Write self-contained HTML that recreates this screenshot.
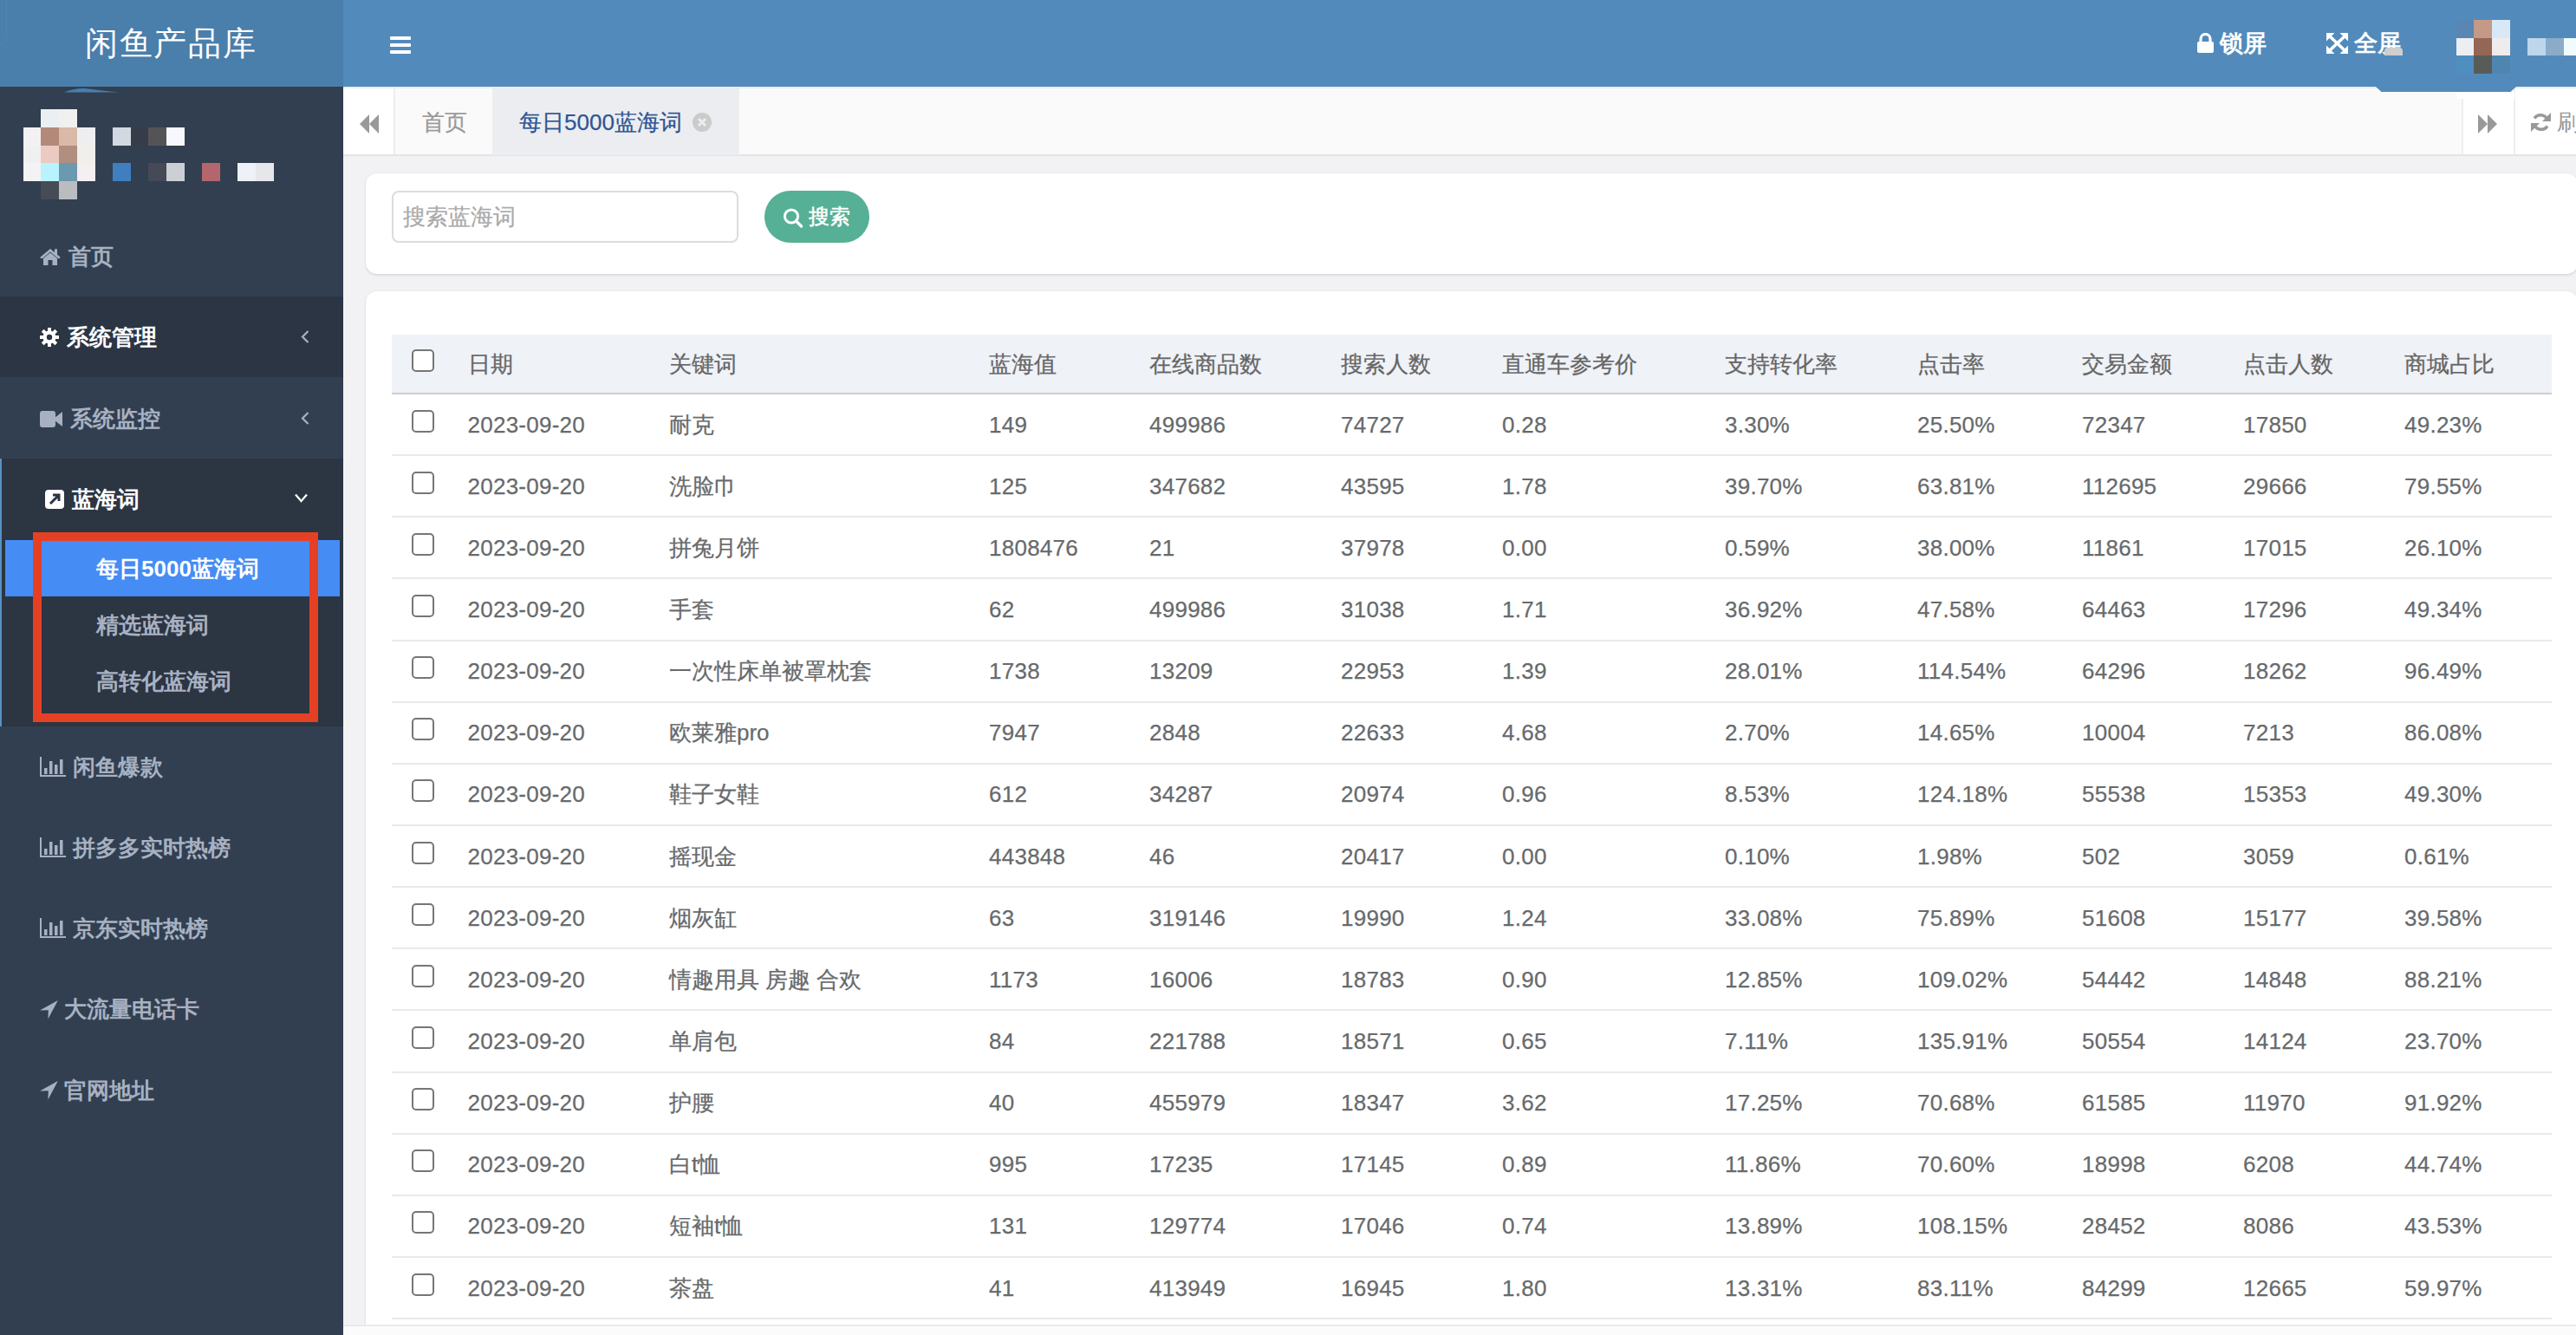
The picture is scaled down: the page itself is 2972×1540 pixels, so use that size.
<!DOCTYPE html><html><head><meta charset="utf-8"><style>
*{margin:0;padding:0;box-sizing:border-box}
html,body{width:2972px;height:1540px;overflow:hidden;background:#f2f2f4;font-family:"Liberation Sans",sans-serif}
.a{position:absolute}
.t{position:absolute;white-space:nowrap;line-height:40px;height:40px}
.c{-webkit-text-stroke:0.25px currentColor}
</style></head><body><div class="a" style="left:0;top:0;width:396px;height:100px;background:#4a7eab"></div>
<div class="a" style="left:396px;top:0;width:2576px;height:100px;background:#528bbb"></div>
<div class="a" style="left:-20px;top:-20px;width:28px;height:73px;border:1px solid rgba(255,255,255,0.06);border-radius:12px"></div>
<div class="t" style="left:98px;top:20px;font-size:38px;color:#fff;font-weight:300;letter-spacing:1.7px;line-height:60px;height:60px">闲鱼产品库</div>
<div class="a" style="left:450px;top:42px;width:24px;height:4px;background:#fff;border-radius:1px"></div>
<div class="a" style="left:450px;top:50px;width:24px;height:4px;background:#fff;border-radius:1px"></div>
<div class="a" style="left:450px;top:58px;width:24px;height:4px;background:#fff;border-radius:1px"></div>
<svg class="a" style="left:2535px;top:38px" width="19" height="23" viewBox="0 0 19 23"><path d="M4 10 V7 a5.5 5.5 0 0 1 11 0 V10" fill="none" stroke="#fff" stroke-width="3.2"/><rect x="0" y="10" width="19" height="13" rx="2" fill="#fff"/></svg>
<div class="t" style="left:2561px;top:30px;font-size:27px;color:#fff;font-weight:bold">锁屏</div>
<svg class="a" style="left:2684px;top:38px" width="25" height="24" viewBox="0 0 25 24"><g fill="#fff"><polygon points="0,0 9.5,0 6.5,3 0,9.5"/><polygon points="25,0 15.5,0 18.5,3 25,9.5"/><polygon points="0,24 9.5,24 6.5,21 0,14.5"/><polygon points="25,24 15.5,24 18.5,21 25,14.5"/></g><path d="M3 3 L22 21 M22 3 L3 21" stroke="#fff" stroke-width="3.6"/></svg>
<div class="t" style="left:2716px;top:30px;font-size:27px;color:#fff;font-weight:bold">全屏</div>
<div class="a" style="left:2751px;top:55px;width:21px;height:9px;background:#cfcfcf;border-radius:4px 4px 0 0"></div>
<div class="a" style="left:2834px;top:23px;width:21px;height:21px;background:#5a86b3"></div>
<div class="a" style="left:2854px;top:23px;width:21px;height:21px;background:#c49a86"></div>
<div class="a" style="left:2875px;top:23px;width:21px;height:21px;background:#d9e8f7"></div>
<div class="a" style="left:2834px;top:44px;width:21px;height:21px;background:#edeef2"></div>
<div class="a" style="left:2854px;top:44px;width:21px;height:21px;background:#936655"></div>
<div class="a" style="left:2875px;top:44px;width:21px;height:21px;background:#eeeced"></div>
<div class="a" style="left:2834px;top:64px;width:21px;height:21px;background:#4f8ec0"></div>
<div class="a" style="left:2854px;top:64px;width:21px;height:21px;background:#585c58"></div>
<div class="a" style="left:2875px;top:64px;width:21px;height:21px;background:#4f86b0"></div>
<div class="a" style="left:2916px;top:44px;width:21px;height:20px;background:#bed6ec"></div>
<div class="a" style="left:2937px;top:44px;width:21px;height:20px;background:#8aacc8"></div>
<div class="a" style="left:2958px;top:44px;width:21px;height:20px;background:#f0fbfe"></div>
<div class="a" style="left:0;top:100px;width:396px;height:1440px;background:#323f50"></div>
<svg class="a" style="left:74px;top:100px" width="65" height="8"><path d="M0 6.5 Q12 1.5 24 2 Q45 4.5 62 6.5 Z" fill="#4a7eab"/></svg>
<div class="a" style="left:47px;top:126px;width:21px;height:21px;background:#eceff2"></div>
<div class="a" style="left:68px;top:126px;width:21px;height:21px;background:#f0f0f0"></div>
<div class="a" style="left:27px;top:147px;width:21px;height:21px;background:#f3f1f3"></div>
<div class="a" style="left:47px;top:147px;width:21px;height:21px;background:#b38979"></div>
<div class="a" style="left:68px;top:147px;width:21px;height:21px;background:#d9b9a7"></div>
<div class="a" style="left:89px;top:147px;width:21px;height:21px;background:#eeeef1"></div>
<div class="a" style="left:27px;top:168px;width:21px;height:21px;background:#f0f0f0"></div>
<div class="a" style="left:47px;top:168px;width:21px;height:21px;background:#ebcbc1"></div>
<div class="a" style="left:68px;top:168px;width:21px;height:21px;background:#b08f80"></div>
<div class="a" style="left:89px;top:168px;width:21px;height:21px;background:#f1efeb"></div>
<div class="a" style="left:27px;top:188px;width:21px;height:21px;background:#f3f2f4"></div>
<div class="a" style="left:47px;top:188px;width:21px;height:21px;background:#b8f3ff"></div>
<div class="a" style="left:68px;top:188px;width:21px;height:21px;background:#6a99b0"></div>
<div class="a" style="left:89px;top:188px;width:21px;height:21px;background:#f4eff1"></div>
<div class="a" style="left:47px;top:209px;width:21px;height:21px;background:#454c55"></div>
<div class="a" style="left:68px;top:209px;width:21px;height:21px;background:#babcc0"></div>
<div class="a" style="left:130px;top:147px;width:21px;height:21px;background:#d3d9e1"></div>
<div class="a" style="left:151px;top:147px;width:21px;height:21px;background:#363c48"></div>
<div class="a" style="left:171px;top:147px;width:21px;height:21px;background:#545457"></div>
<div class="a" style="left:192px;top:147px;width:21px;height:21px;background:#f6f8fd"></div>
<div class="a" style="left:130px;top:188px;width:21px;height:21px;background:#3f7fc0"></div>
<div class="a" style="left:171px;top:188px;width:21px;height:21px;background:#464a56"></div>
<div class="a" style="left:192px;top:188px;width:21px;height:21px;background:#ccd0d5"></div>
<div class="a" style="left:233px;top:188px;width:21px;height:21px;background:#b3666e"></div>
<div class="a" style="left:274px;top:188px;width:21px;height:21px;background:#eef1f8"></div>
<div class="a" style="left:295px;top:188px;width:21px;height:21px;background:#e6e7eb"></div>
<div class="a" style="left:0;top:342px;width:396px;height:93px;background:#2b3544"></div>
<div class="a" style="left:0;top:529px;width:396px;height:309px;background:#2c3542"></div>
<div class="a" style="left:0;top:529px;width:2px;height:309px;background:#5891c2"></div>
<div class="a" style="left:6px;top:623px;width:386px;height:65px;background:#458cf4"></div>
<svg class="a" style="left:46px;top:287px" width="24" height="19" viewBox="0 0 24 19"><path d="M12 0 L24 10 L21.5 11.5 L12 3.5 L2.5 11.5 L0 10 Z M17 0.3 H20 V8 L17 5.5 Z" fill="#a7b1c2"/><path d="M4 11 L12 4.5 L20 11 V19 H14.5 V13 H9.5 V19 H4 Z" fill="#a7b1c2"/></svg>
<div class="t" style="left:79px;top:276px;font-size:26px;color:#a7b1c2;font-weight:bold">首页</div>
<svg class="a" style="left:46px;top:378px" width="22" height="22" viewBox="0 0 22 22"><g fill="#fff"><circle cx="11" cy="11" r="7.5"/><rect x="9" y="0" width="4" height="6" transform="rotate(0 11 11)"/><rect x="9" y="0" width="4" height="6" transform="rotate(45 11 11)"/><rect x="9" y="0" width="4" height="6" transform="rotate(90 11 11)"/><rect x="9" y="0" width="4" height="6" transform="rotate(135 11 11)"/><rect x="9" y="0" width="4" height="6" transform="rotate(180 11 11)"/><rect x="9" y="0" width="4" height="6" transform="rotate(225 11 11)"/><rect x="9" y="0" width="4" height="6" transform="rotate(270 11 11)"/><rect x="9" y="0" width="4" height="6" transform="rotate(315 11 11)"/></g><circle cx="11" cy="11" r="3.2" fill="#2b3544"/></svg>
<div class="t" style="left:77px;top:369px;font-size:26px;color:#fff;font-weight:bold">系统管理</div>
<svg class="a" style="left:347px;top:381px" width="10" height="15" viewBox="0 0 10 15"><path d="M8.5 1 L2 7.5 L8.5 14" fill="none" stroke="#a7b1c2" stroke-width="2.2"/></svg>
<svg class="a" style="left:46px;top:474px" width="26" height="19" viewBox="0 0 26 19"><rect x="0" y="0" width="18" height="19" rx="3" fill="#a7b1c2"/><polygon points="17,8 26,1 26,18 17,11" fill="#a7b1c2"/></svg>
<div class="t" style="left:81px;top:463px;font-size:26px;color:#a7b1c2;font-weight:bold">系统监控</div>
<svg class="a" style="left:347px;top:475px" width="10" height="15" viewBox="0 0 10 15"><path d="M8.5 1 L2 7.5 L8.5 14" fill="none" stroke="#a7b1c2" stroke-width="2.2"/></svg>
<svg class="a" style="left:52px;top:565px" width="22" height="22" viewBox="0 0 22 22"><rect x="0" y="0" width="22" height="22" rx="4" fill="#fff"/><path d="M6 16 L15 7 M9 6 H16 V13" fill="none" stroke="#2c3542" stroke-width="3"/></svg>
<div class="t" style="left:83px;top:556px;font-size:26px;color:#fff;font-weight:bold">蓝海词</div>
<svg class="a" style="left:340px;top:569px" width="15" height="11" viewBox="0 0 15 11"><path d="M1 1.5 L7.5 9 L14 1.5" fill="none" stroke="#fff" stroke-width="2.2"/></svg>
<div class="t" style="left:111px;top:636px;font-size:26px;color:#fff;font-weight:bold">每日5000蓝海词</div>
<div class="t" style="left:111px;top:701px;font-size:26px;color:#a7b1c2;font-weight:bold">精选蓝海词</div>
<div class="t" style="left:111px;top:766px;font-size:26px;color:#a7b1c2;font-weight:bold">高转化蓝海词</div>
<div class="a" style="left:38px;top:614px;width:329px;height:219px;border:10px solid #e64024"></div>
<svg class="a" style="left:46px;top:873px" width="30" height="23" viewBox="0 0 30 23"><g fill="#a7b1c2"><rect x="0" y="0" width="2" height="23"/><rect x="0" y="21" width="30" height="2"/><rect x="5" y="13" width="3.5" height="7"/><rect x="11" y="5" width="3.5" height="15"/><rect x="17" y="9" width="3.5" height="11"/><rect x="23" y="3" width="3.5" height="17"/></g></svg>
<div class="t" style="left:84px;top:865px;font-size:26px;color:#a7b1c2;font-weight:bold">闲鱼爆款</div>
<svg class="a" style="left:46px;top:966px" width="30" height="23" viewBox="0 0 30 23"><g fill="#a7b1c2"><rect x="0" y="0" width="2" height="23"/><rect x="0" y="21" width="30" height="2"/><rect x="5" y="13" width="3.5" height="7"/><rect x="11" y="5" width="3.5" height="15"/><rect x="17" y="9" width="3.5" height="11"/><rect x="23" y="3" width="3.5" height="17"/></g></svg>
<div class="t" style="left:84px;top:958px;font-size:26px;color:#a7b1c2;font-weight:bold">拼多多实时热榜</div>
<svg class="a" style="left:46px;top:1059px" width="30" height="23" viewBox="0 0 30 23"><g fill="#a7b1c2"><rect x="0" y="0" width="2" height="23"/><rect x="0" y="21" width="30" height="2"/><rect x="5" y="13" width="3.5" height="7"/><rect x="11" y="5" width="3.5" height="15"/><rect x="17" y="9" width="3.5" height="11"/><rect x="23" y="3" width="3.5" height="17"/></g></svg>
<div class="t" style="left:84px;top:1051px;font-size:26px;color:#a7b1c2;font-weight:bold">京东实时热榜</div>
<svg class="a" style="left:46px;top:1154px" width="21" height="22" viewBox="0 0 21 22"><path d="M20.8 0 L0 11.6 L9.8 11.2 L9.4 21.6 Z" fill="#a7b1c2"/></svg>
<div class="t" style="left:74px;top:1144px;font-size:26px;color:#a7b1c2;font-weight:bold">大流量电话卡</div>
<svg class="a" style="left:46px;top:1247px" width="21" height="22" viewBox="0 0 21 22"><path d="M20.8 0 L0 11.6 L9.8 11.2 L9.4 21.6 Z" fill="#a7b1c2"/></svg>
<div class="t" style="left:74px;top:1238px;font-size:26px;color:#a7b1c2;font-weight:bold">官网地址</div>
<div class="a" style="left:396px;top:100px;width:2576px;height:2px;background:#e8ebef"></div>
<div class="a" style="left:396px;top:102px;width:2576px;height:76px;background:#fafafa"></div>
<div class="a" style="left:396px;top:178px;width:2576px;height:2px;background:#e5e5e6"></div>
<div class="a" style="left:396px;top:102px;width:60px;height:76px;background:#fff;border-right:2px solid #eee"></div>
<svg class="a" style="left:415px;top:132px" width="22" height="22" viewBox="0 0 22 22"><polygon points="0,11 11,0 11,22" fill="#999"/><polygon points="11,11 22,0 22,22" fill="#999"/></svg>
<div class="t c" style="left:487px;top:121px;font-size:26px;color:#999">首页</div>
<div class="a" style="left:568px;top:102px;width:285px;height:77px;background:#ecedf0"></div>
<div class="t c" style="left:599px;top:121px;font-size:26px;color:#2f5596">每日5000蓝海词</div>
<svg class="a" style="left:799px;top:130px" width="22" height="22" viewBox="0 0 22 22"><circle cx="11" cy="11" r="11" fill="#cbcbcb"/><path d="M7 7 L15 15 M15 7 L7 15" stroke="#ecedf0" stroke-width="3"/></svg>
<div class="a" style="left:2840px;top:102px;width:62px;height:76px;background:#fff;border-left:2px solid #eee;border-right:2px solid #eee"></div>
<svg class="a" style="left:2859px;top:132px" width="22" height="22" viewBox="0 0 22 22"><polygon points="0,0 11,11 0,22" fill="#999"/><polygon points="11,0 22,11 11,22" fill="#999"/></svg>
<div class="a" style="left:2902px;top:102px;width:70px;height:76px;background:#fff"></div>
<svg class="a" style="left:2920px;top:130px" width="23" height="22" viewBox="0 0 23 22"><path d="M19 8 A8.5 8.5 0 0 0 4 6.5" fill="none" stroke="#999" stroke-width="3.5"/><polygon points="23,0 23,10 13,10" fill="#999"/><path d="M4 14 A8.5 8.5 0 0 0 19 15.5" fill="none" stroke="#999" stroke-width="3.5"/><polygon points="0,22 0,12 10,12" fill="#999"/></svg>
<div class="t" style="left:2950px;top:121px;font-size:26px;color:#999">刷新</div>
<svg class="a" style="left:2741px;top:100px" width="162" height="6"><polygon points="0,0 162,0 155.5,6 6.5,6" fill="#528bbb"/></svg>
<div class="a" style="left:2834px;top:106px;width:67px;height:8px;background:#fff"></div>
<div class="a" style="left:422px;top:200px;width:2552px;height:116px;background:#fff;border-radius:13px;box-shadow:0 0 3px rgba(0,0,0,0.07),0 2px 3px rgba(0,0,0,0.08)"></div>
<div class="a" style="left:452px;top:220px;width:400px;height:60px;background:#fff;border:2px solid #dcdcdc;border-radius:8px"></div>
<div class="t c" style="left:465px;top:230px;font-size:26px;color:#aaa">搜索蓝海词</div>
<div class="a" style="left:882px;top:220px;width:121px;height:60px;background:#55b095;border-radius:30px"></div>
<svg class="a" style="left:903px;top:239px" width="24" height="24" viewBox="0 0 24 24"><circle cx="10" cy="10.5" r="7.6" fill="none" stroke="#fff" stroke-width="3"/><path d="M15.5 16 L21.5 22" stroke="#fff" stroke-width="3.4" stroke-linecap="round"/></svg>
<div class="t" style="left:933px;top:230px;font-size:24px;color:#fff;-webkit-text-stroke:0.5px #fff">搜索</div>
<div class="a" style="left:422px;top:336px;width:2552px;height:1300px;background:#fff;border-radius:13px;box-shadow:0 0 3px rgba(0,0,0,0.07),0 2px 3px rgba(0,0,0,0.08)"></div>
<div class="a" style="left:452px;top:386px;width:2492px;height:67px;background:#eff2f7"></div>
<div class="a" style="left:452px;top:453px;width:2492px;height:2px;background:#cdced0"></div>
<div class="a" style="left:475px;top:403px;width:26px;height:26px;border:2px solid #767676;border-radius:5px;background:#fff"></div>
<div class="t c" style="left:539.5px;top:400px;font-size:26px;color:#666">日期</div>
<div class="t c" style="left:772px;top:400px;font-size:26px;color:#666">关键词</div>
<div class="t c" style="left:1141px;top:400px;font-size:26px;color:#666">蓝海值</div>
<div class="t c" style="left:1326px;top:400px;font-size:26px;color:#666">在线商品数</div>
<div class="t c" style="left:1547px;top:400px;font-size:26px;color:#666">搜索人数</div>
<div class="t c" style="left:1733px;top:400px;font-size:26px;color:#666">直通车参考价</div>
<div class="t c" style="left:1990px;top:400px;font-size:26px;color:#666">支持转化率</div>
<div class="t c" style="left:2212px;top:400px;font-size:26px;color:#666">点击率</div>
<div class="t c" style="left:2402px;top:400px;font-size:26px;color:#666">交易金额</div>
<div class="t c" style="left:2588px;top:400px;font-size:26px;color:#666">点击人数</div>
<div class="t c" style="left:2774px;top:400px;font-size:26px;color:#666">商城占比</div>
<div class="a" style="left:452px;top:524.14px;width:2492px;height:2px;background:#e8e9eb"></div>
<div class="a" style="left:475px;top:473px;width:26px;height:26px;border:2px solid #767676;border-radius:5px;background:#fff"></div>
<div class="t c" style="left:539.5px;top:469.57px;font-size:26px;color:#676a6c;letter-spacing:0.25px;">2023-09-20</div>
<div class="t c" style="left:772px;top:469.57px;font-size:26px;color:#676a6c;">耐克</div>
<div class="t c" style="left:1141px;top:469.57px;font-size:26px;color:#676a6c;letter-spacing:0.25px;">149</div>
<div class="t c" style="left:1326px;top:469.57px;font-size:26px;color:#676a6c;letter-spacing:0.25px;">499986</div>
<div class="t c" style="left:1547px;top:469.57px;font-size:26px;color:#676a6c;letter-spacing:0.25px;">74727</div>
<div class="t c" style="left:1733px;top:469.57px;font-size:26px;color:#676a6c;letter-spacing:0.25px;">0.28</div>
<div class="t c" style="left:1990px;top:469.57px;font-size:26px;color:#676a6c;letter-spacing:0.25px;">3.30%</div>
<div class="t c" style="left:2212px;top:469.57px;font-size:26px;color:#676a6c;letter-spacing:0.25px;">25.50%</div>
<div class="t c" style="left:2402px;top:469.57px;font-size:26px;color:#676a6c;letter-spacing:0.25px;">72347</div>
<div class="t c" style="left:2588px;top:469.57px;font-size:26px;color:#676a6c;letter-spacing:0.25px;">17850</div>
<div class="t c" style="left:2774px;top:469.57px;font-size:26px;color:#676a6c;letter-spacing:0.25px;">49.23%</div>
<div class="a" style="left:452px;top:595.28px;width:2492px;height:2px;background:#e8e9eb"></div>
<div class="a" style="left:475px;top:544px;width:26px;height:26px;border:2px solid #767676;border-radius:5px;background:#fff"></div>
<div class="t c" style="left:539.5px;top:540.71px;font-size:26px;color:#676a6c;letter-spacing:0.25px;">2023-09-20</div>
<div class="t c" style="left:772px;top:540.71px;font-size:26px;color:#676a6c;">洗脸巾</div>
<div class="t c" style="left:1141px;top:540.71px;font-size:26px;color:#676a6c;letter-spacing:0.25px;">125</div>
<div class="t c" style="left:1326px;top:540.71px;font-size:26px;color:#676a6c;letter-spacing:0.25px;">347682</div>
<div class="t c" style="left:1547px;top:540.71px;font-size:26px;color:#676a6c;letter-spacing:0.25px;">43595</div>
<div class="t c" style="left:1733px;top:540.71px;font-size:26px;color:#676a6c;letter-spacing:0.25px;">1.78</div>
<div class="t c" style="left:1990px;top:540.71px;font-size:26px;color:#676a6c;letter-spacing:0.25px;">39.70%</div>
<div class="t c" style="left:2212px;top:540.71px;font-size:26px;color:#676a6c;letter-spacing:0.25px;">63.81%</div>
<div class="t c" style="left:2402px;top:540.71px;font-size:26px;color:#676a6c;letter-spacing:0.25px;">112695</div>
<div class="t c" style="left:2588px;top:540.71px;font-size:26px;color:#676a6c;letter-spacing:0.25px;">29666</div>
<div class="t c" style="left:2774px;top:540.71px;font-size:26px;color:#676a6c;letter-spacing:0.25px;">79.55%</div>
<div class="a" style="left:452px;top:666.42px;width:2492px;height:2px;background:#e8e9eb"></div>
<div class="a" style="left:475px;top:615px;width:26px;height:26px;border:2px solid #767676;border-radius:5px;background:#fff"></div>
<div class="t c" style="left:539.5px;top:611.85px;font-size:26px;color:#676a6c;letter-spacing:0.25px;">2023-09-20</div>
<div class="t c" style="left:772px;top:611.85px;font-size:26px;color:#676a6c;">拼兔月饼</div>
<div class="t c" style="left:1141px;top:611.85px;font-size:26px;color:#676a6c;letter-spacing:0.25px;">1808476</div>
<div class="t c" style="left:1326px;top:611.85px;font-size:26px;color:#676a6c;letter-spacing:0.25px;">21</div>
<div class="t c" style="left:1547px;top:611.85px;font-size:26px;color:#676a6c;letter-spacing:0.25px;">37978</div>
<div class="t c" style="left:1733px;top:611.85px;font-size:26px;color:#676a6c;letter-spacing:0.25px;">0.00</div>
<div class="t c" style="left:1990px;top:611.85px;font-size:26px;color:#676a6c;letter-spacing:0.25px;">0.59%</div>
<div class="t c" style="left:2212px;top:611.85px;font-size:26px;color:#676a6c;letter-spacing:0.25px;">38.00%</div>
<div class="t c" style="left:2402px;top:611.85px;font-size:26px;color:#676a6c;letter-spacing:0.25px;">11861</div>
<div class="t c" style="left:2588px;top:611.85px;font-size:26px;color:#676a6c;letter-spacing:0.25px;">17015</div>
<div class="t c" style="left:2774px;top:611.85px;font-size:26px;color:#676a6c;letter-spacing:0.25px;">26.10%</div>
<div class="a" style="left:452px;top:737.56px;width:2492px;height:2px;background:#e8e9eb"></div>
<div class="a" style="left:475px;top:686px;width:26px;height:26px;border:2px solid #767676;border-radius:5px;background:#fff"></div>
<div class="t c" style="left:539.5px;top:682.99px;font-size:26px;color:#676a6c;letter-spacing:0.25px;">2023-09-20</div>
<div class="t c" style="left:772px;top:682.99px;font-size:26px;color:#676a6c;">手套</div>
<div class="t c" style="left:1141px;top:682.99px;font-size:26px;color:#676a6c;letter-spacing:0.25px;">62</div>
<div class="t c" style="left:1326px;top:682.99px;font-size:26px;color:#676a6c;letter-spacing:0.25px;">499986</div>
<div class="t c" style="left:1547px;top:682.99px;font-size:26px;color:#676a6c;letter-spacing:0.25px;">31038</div>
<div class="t c" style="left:1733px;top:682.99px;font-size:26px;color:#676a6c;letter-spacing:0.25px;">1.71</div>
<div class="t c" style="left:1990px;top:682.99px;font-size:26px;color:#676a6c;letter-spacing:0.25px;">36.92%</div>
<div class="t c" style="left:2212px;top:682.99px;font-size:26px;color:#676a6c;letter-spacing:0.25px;">47.58%</div>
<div class="t c" style="left:2402px;top:682.99px;font-size:26px;color:#676a6c;letter-spacing:0.25px;">64463</div>
<div class="t c" style="left:2588px;top:682.99px;font-size:26px;color:#676a6c;letter-spacing:0.25px;">17296</div>
<div class="t c" style="left:2774px;top:682.99px;font-size:26px;color:#676a6c;letter-spacing:0.25px;">49.34%</div>
<div class="a" style="left:452px;top:808.70px;width:2492px;height:2px;background:#e8e9eb"></div>
<div class="a" style="left:475px;top:757px;width:26px;height:26px;border:2px solid #767676;border-radius:5px;background:#fff"></div>
<div class="t c" style="left:539.5px;top:754.13px;font-size:26px;color:#676a6c;letter-spacing:0.25px;">2023-09-20</div>
<div class="t c" style="left:772px;top:754.13px;font-size:26px;color:#676a6c;">一次性床单被罩枕套</div>
<div class="t c" style="left:1141px;top:754.13px;font-size:26px;color:#676a6c;letter-spacing:0.25px;">1738</div>
<div class="t c" style="left:1326px;top:754.13px;font-size:26px;color:#676a6c;letter-spacing:0.25px;">13209</div>
<div class="t c" style="left:1547px;top:754.13px;font-size:26px;color:#676a6c;letter-spacing:0.25px;">22953</div>
<div class="t c" style="left:1733px;top:754.13px;font-size:26px;color:#676a6c;letter-spacing:0.25px;">1.39</div>
<div class="t c" style="left:1990px;top:754.13px;font-size:26px;color:#676a6c;letter-spacing:0.25px;">28.01%</div>
<div class="t c" style="left:2212px;top:754.13px;font-size:26px;color:#676a6c;letter-spacing:0.25px;">114.54%</div>
<div class="t c" style="left:2402px;top:754.13px;font-size:26px;color:#676a6c;letter-spacing:0.25px;">64296</div>
<div class="t c" style="left:2588px;top:754.13px;font-size:26px;color:#676a6c;letter-spacing:0.25px;">18262</div>
<div class="t c" style="left:2774px;top:754.13px;font-size:26px;color:#676a6c;letter-spacing:0.25px;">96.49%</div>
<div class="a" style="left:452px;top:879.84px;width:2492px;height:2px;background:#e8e9eb"></div>
<div class="a" style="left:475px;top:828px;width:26px;height:26px;border:2px solid #767676;border-radius:5px;background:#fff"></div>
<div class="t c" style="left:539.5px;top:825.27px;font-size:26px;color:#676a6c;letter-spacing:0.25px;">2023-09-20</div>
<div class="t c" style="left:772px;top:825.27px;font-size:26px;color:#676a6c;">欧莱雅pro</div>
<div class="t c" style="left:1141px;top:825.27px;font-size:26px;color:#676a6c;letter-spacing:0.25px;">7947</div>
<div class="t c" style="left:1326px;top:825.27px;font-size:26px;color:#676a6c;letter-spacing:0.25px;">2848</div>
<div class="t c" style="left:1547px;top:825.27px;font-size:26px;color:#676a6c;letter-spacing:0.25px;">22633</div>
<div class="t c" style="left:1733px;top:825.27px;font-size:26px;color:#676a6c;letter-spacing:0.25px;">4.68</div>
<div class="t c" style="left:1990px;top:825.27px;font-size:26px;color:#676a6c;letter-spacing:0.25px;">2.70%</div>
<div class="t c" style="left:2212px;top:825.27px;font-size:26px;color:#676a6c;letter-spacing:0.25px;">14.65%</div>
<div class="t c" style="left:2402px;top:825.27px;font-size:26px;color:#676a6c;letter-spacing:0.25px;">10004</div>
<div class="t c" style="left:2588px;top:825.27px;font-size:26px;color:#676a6c;letter-spacing:0.25px;">7213</div>
<div class="t c" style="left:2774px;top:825.27px;font-size:26px;color:#676a6c;letter-spacing:0.25px;">86.08%</div>
<div class="a" style="left:452px;top:950.98px;width:2492px;height:2px;background:#e8e9eb"></div>
<div class="a" style="left:475px;top:899px;width:26px;height:26px;border:2px solid #767676;border-radius:5px;background:#fff"></div>
<div class="t c" style="left:539.5px;top:896.41px;font-size:26px;color:#676a6c;letter-spacing:0.25px;">2023-09-20</div>
<div class="t c" style="left:772px;top:896.41px;font-size:26px;color:#676a6c;">鞋子女鞋</div>
<div class="t c" style="left:1141px;top:896.41px;font-size:26px;color:#676a6c;letter-spacing:0.25px;">612</div>
<div class="t c" style="left:1326px;top:896.41px;font-size:26px;color:#676a6c;letter-spacing:0.25px;">34287</div>
<div class="t c" style="left:1547px;top:896.41px;font-size:26px;color:#676a6c;letter-spacing:0.25px;">20974</div>
<div class="t c" style="left:1733px;top:896.41px;font-size:26px;color:#676a6c;letter-spacing:0.25px;">0.96</div>
<div class="t c" style="left:1990px;top:896.41px;font-size:26px;color:#676a6c;letter-spacing:0.25px;">8.53%</div>
<div class="t c" style="left:2212px;top:896.41px;font-size:26px;color:#676a6c;letter-spacing:0.25px;">124.18%</div>
<div class="t c" style="left:2402px;top:896.41px;font-size:26px;color:#676a6c;letter-spacing:0.25px;">55538</div>
<div class="t c" style="left:2588px;top:896.41px;font-size:26px;color:#676a6c;letter-spacing:0.25px;">15353</div>
<div class="t c" style="left:2774px;top:896.41px;font-size:26px;color:#676a6c;letter-spacing:0.25px;">49.30%</div>
<div class="a" style="left:452px;top:1022.12px;width:2492px;height:2px;background:#e8e9eb"></div>
<div class="a" style="left:475px;top:971px;width:26px;height:26px;border:2px solid #767676;border-radius:5px;background:#fff"></div>
<div class="t c" style="left:539.5px;top:967.55px;font-size:26px;color:#676a6c;letter-spacing:0.25px;">2023-09-20</div>
<div class="t c" style="left:772px;top:967.55px;font-size:26px;color:#676a6c;">摇现金</div>
<div class="t c" style="left:1141px;top:967.55px;font-size:26px;color:#676a6c;letter-spacing:0.25px;">443848</div>
<div class="t c" style="left:1326px;top:967.55px;font-size:26px;color:#676a6c;letter-spacing:0.25px;">46</div>
<div class="t c" style="left:1547px;top:967.55px;font-size:26px;color:#676a6c;letter-spacing:0.25px;">20417</div>
<div class="t c" style="left:1733px;top:967.55px;font-size:26px;color:#676a6c;letter-spacing:0.25px;">0.00</div>
<div class="t c" style="left:1990px;top:967.55px;font-size:26px;color:#676a6c;letter-spacing:0.25px;">0.10%</div>
<div class="t c" style="left:2212px;top:967.55px;font-size:26px;color:#676a6c;letter-spacing:0.25px;">1.98%</div>
<div class="t c" style="left:2402px;top:967.55px;font-size:26px;color:#676a6c;letter-spacing:0.25px;">502</div>
<div class="t c" style="left:2588px;top:967.55px;font-size:26px;color:#676a6c;letter-spacing:0.25px;">3059</div>
<div class="t c" style="left:2774px;top:967.55px;font-size:26px;color:#676a6c;letter-spacing:0.25px;">0.61%</div>
<div class="a" style="left:452px;top:1093.26px;width:2492px;height:2px;background:#e8e9eb"></div>
<div class="a" style="left:475px;top:1042px;width:26px;height:26px;border:2px solid #767676;border-radius:5px;background:#fff"></div>
<div class="t c" style="left:539.5px;top:1038.69px;font-size:26px;color:#676a6c;letter-spacing:0.25px;">2023-09-20</div>
<div class="t c" style="left:772px;top:1038.69px;font-size:26px;color:#676a6c;">烟灰缸</div>
<div class="t c" style="left:1141px;top:1038.69px;font-size:26px;color:#676a6c;letter-spacing:0.25px;">63</div>
<div class="t c" style="left:1326px;top:1038.69px;font-size:26px;color:#676a6c;letter-spacing:0.25px;">319146</div>
<div class="t c" style="left:1547px;top:1038.69px;font-size:26px;color:#676a6c;letter-spacing:0.25px;">19990</div>
<div class="t c" style="left:1733px;top:1038.69px;font-size:26px;color:#676a6c;letter-spacing:0.25px;">1.24</div>
<div class="t c" style="left:1990px;top:1038.69px;font-size:26px;color:#676a6c;letter-spacing:0.25px;">33.08%</div>
<div class="t c" style="left:2212px;top:1038.69px;font-size:26px;color:#676a6c;letter-spacing:0.25px;">75.89%</div>
<div class="t c" style="left:2402px;top:1038.69px;font-size:26px;color:#676a6c;letter-spacing:0.25px;">51608</div>
<div class="t c" style="left:2588px;top:1038.69px;font-size:26px;color:#676a6c;letter-spacing:0.25px;">15177</div>
<div class="t c" style="left:2774px;top:1038.69px;font-size:26px;color:#676a6c;letter-spacing:0.25px;">39.58%</div>
<div class="a" style="left:452px;top:1164.40px;width:2492px;height:2px;background:#e8e9eb"></div>
<div class="a" style="left:475px;top:1113px;width:26px;height:26px;border:2px solid #767676;border-radius:5px;background:#fff"></div>
<div class="t c" style="left:539.5px;top:1109.83px;font-size:26px;color:#676a6c;letter-spacing:0.25px;">2023-09-20</div>
<div class="t c" style="left:772px;top:1109.83px;font-size:26px;color:#676a6c;">情趣用具 房趣 合欢</div>
<div class="t c" style="left:1141px;top:1109.83px;font-size:26px;color:#676a6c;letter-spacing:0.25px;">1173</div>
<div class="t c" style="left:1326px;top:1109.83px;font-size:26px;color:#676a6c;letter-spacing:0.25px;">16006</div>
<div class="t c" style="left:1547px;top:1109.83px;font-size:26px;color:#676a6c;letter-spacing:0.25px;">18783</div>
<div class="t c" style="left:1733px;top:1109.83px;font-size:26px;color:#676a6c;letter-spacing:0.25px;">0.90</div>
<div class="t c" style="left:1990px;top:1109.83px;font-size:26px;color:#676a6c;letter-spacing:0.25px;">12.85%</div>
<div class="t c" style="left:2212px;top:1109.83px;font-size:26px;color:#676a6c;letter-spacing:0.25px;">109.02%</div>
<div class="t c" style="left:2402px;top:1109.83px;font-size:26px;color:#676a6c;letter-spacing:0.25px;">54442</div>
<div class="t c" style="left:2588px;top:1109.83px;font-size:26px;color:#676a6c;letter-spacing:0.25px;">14848</div>
<div class="t c" style="left:2774px;top:1109.83px;font-size:26px;color:#676a6c;letter-spacing:0.25px;">88.21%</div>
<div class="a" style="left:452px;top:1235.54px;width:2492px;height:2px;background:#e8e9eb"></div>
<div class="a" style="left:475px;top:1184px;width:26px;height:26px;border:2px solid #767676;border-radius:5px;background:#fff"></div>
<div class="t c" style="left:539.5px;top:1180.97px;font-size:26px;color:#676a6c;letter-spacing:0.25px;">2023-09-20</div>
<div class="t c" style="left:772px;top:1180.97px;font-size:26px;color:#676a6c;">单肩包</div>
<div class="t c" style="left:1141px;top:1180.97px;font-size:26px;color:#676a6c;letter-spacing:0.25px;">84</div>
<div class="t c" style="left:1326px;top:1180.97px;font-size:26px;color:#676a6c;letter-spacing:0.25px;">221788</div>
<div class="t c" style="left:1547px;top:1180.97px;font-size:26px;color:#676a6c;letter-spacing:0.25px;">18571</div>
<div class="t c" style="left:1733px;top:1180.97px;font-size:26px;color:#676a6c;letter-spacing:0.25px;">0.65</div>
<div class="t c" style="left:1990px;top:1180.97px;font-size:26px;color:#676a6c;letter-spacing:0.25px;">7.11%</div>
<div class="t c" style="left:2212px;top:1180.97px;font-size:26px;color:#676a6c;letter-spacing:0.25px;">135.91%</div>
<div class="t c" style="left:2402px;top:1180.97px;font-size:26px;color:#676a6c;letter-spacing:0.25px;">50554</div>
<div class="t c" style="left:2588px;top:1180.97px;font-size:26px;color:#676a6c;letter-spacing:0.25px;">14124</div>
<div class="t c" style="left:2774px;top:1180.97px;font-size:26px;color:#676a6c;letter-spacing:0.25px;">23.70%</div>
<div class="a" style="left:452px;top:1306.68px;width:2492px;height:2px;background:#e8e9eb"></div>
<div class="a" style="left:475px;top:1255px;width:26px;height:26px;border:2px solid #767676;border-radius:5px;background:#fff"></div>
<div class="t c" style="left:539.5px;top:1252.11px;font-size:26px;color:#676a6c;letter-spacing:0.25px;">2023-09-20</div>
<div class="t c" style="left:772px;top:1252.11px;font-size:26px;color:#676a6c;">护腰</div>
<div class="t c" style="left:1141px;top:1252.11px;font-size:26px;color:#676a6c;letter-spacing:0.25px;">40</div>
<div class="t c" style="left:1326px;top:1252.11px;font-size:26px;color:#676a6c;letter-spacing:0.25px;">455979</div>
<div class="t c" style="left:1547px;top:1252.11px;font-size:26px;color:#676a6c;letter-spacing:0.25px;">18347</div>
<div class="t c" style="left:1733px;top:1252.11px;font-size:26px;color:#676a6c;letter-spacing:0.25px;">3.62</div>
<div class="t c" style="left:1990px;top:1252.11px;font-size:26px;color:#676a6c;letter-spacing:0.25px;">17.25%</div>
<div class="t c" style="left:2212px;top:1252.11px;font-size:26px;color:#676a6c;letter-spacing:0.25px;">70.68%</div>
<div class="t c" style="left:2402px;top:1252.11px;font-size:26px;color:#676a6c;letter-spacing:0.25px;">61585</div>
<div class="t c" style="left:2588px;top:1252.11px;font-size:26px;color:#676a6c;letter-spacing:0.25px;">11970</div>
<div class="t c" style="left:2774px;top:1252.11px;font-size:26px;color:#676a6c;letter-spacing:0.25px;">91.92%</div>
<div class="a" style="left:452px;top:1377.82px;width:2492px;height:2px;background:#e8e9eb"></div>
<div class="a" style="left:475px;top:1326px;width:26px;height:26px;border:2px solid #767676;border-radius:5px;background:#fff"></div>
<div class="t c" style="left:539.5px;top:1323.25px;font-size:26px;color:#676a6c;letter-spacing:0.25px;">2023-09-20</div>
<div class="t c" style="left:772px;top:1323.25px;font-size:26px;color:#676a6c;">白t恤</div>
<div class="t c" style="left:1141px;top:1323.25px;font-size:26px;color:#676a6c;letter-spacing:0.25px;">995</div>
<div class="t c" style="left:1326px;top:1323.25px;font-size:26px;color:#676a6c;letter-spacing:0.25px;">17235</div>
<div class="t c" style="left:1547px;top:1323.25px;font-size:26px;color:#676a6c;letter-spacing:0.25px;">17145</div>
<div class="t c" style="left:1733px;top:1323.25px;font-size:26px;color:#676a6c;letter-spacing:0.25px;">0.89</div>
<div class="t c" style="left:1990px;top:1323.25px;font-size:26px;color:#676a6c;letter-spacing:0.25px;">11.86%</div>
<div class="t c" style="left:2212px;top:1323.25px;font-size:26px;color:#676a6c;letter-spacing:0.25px;">70.60%</div>
<div class="t c" style="left:2402px;top:1323.25px;font-size:26px;color:#676a6c;letter-spacing:0.25px;">18998</div>
<div class="t c" style="left:2588px;top:1323.25px;font-size:26px;color:#676a6c;letter-spacing:0.25px;">6208</div>
<div class="t c" style="left:2774px;top:1323.25px;font-size:26px;color:#676a6c;letter-spacing:0.25px;">44.74%</div>
<div class="a" style="left:452px;top:1448.96px;width:2492px;height:2px;background:#e8e9eb"></div>
<div class="a" style="left:475px;top:1397px;width:26px;height:26px;border:2px solid #767676;border-radius:5px;background:#fff"></div>
<div class="t c" style="left:539.5px;top:1394.39px;font-size:26px;color:#676a6c;letter-spacing:0.25px;">2023-09-20</div>
<div class="t c" style="left:772px;top:1394.39px;font-size:26px;color:#676a6c;">短袖t恤</div>
<div class="t c" style="left:1141px;top:1394.39px;font-size:26px;color:#676a6c;letter-spacing:0.25px;">131</div>
<div class="t c" style="left:1326px;top:1394.39px;font-size:26px;color:#676a6c;letter-spacing:0.25px;">129774</div>
<div class="t c" style="left:1547px;top:1394.39px;font-size:26px;color:#676a6c;letter-spacing:0.25px;">17046</div>
<div class="t c" style="left:1733px;top:1394.39px;font-size:26px;color:#676a6c;letter-spacing:0.25px;">0.74</div>
<div class="t c" style="left:1990px;top:1394.39px;font-size:26px;color:#676a6c;letter-spacing:0.25px;">13.89%</div>
<div class="t c" style="left:2212px;top:1394.39px;font-size:26px;color:#676a6c;letter-spacing:0.25px;">108.15%</div>
<div class="t c" style="left:2402px;top:1394.39px;font-size:26px;color:#676a6c;letter-spacing:0.25px;">28452</div>
<div class="t c" style="left:2588px;top:1394.39px;font-size:26px;color:#676a6c;letter-spacing:0.25px;">8086</div>
<div class="t c" style="left:2774px;top:1394.39px;font-size:26px;color:#676a6c;letter-spacing:0.25px;">43.53%</div>
<div class="a" style="left:452px;top:1520.10px;width:2492px;height:2px;background:#e8e9eb"></div>
<div class="a" style="left:475px;top:1469px;width:26px;height:26px;border:2px solid #767676;border-radius:5px;background:#fff"></div>
<div class="t c" style="left:539.5px;top:1465.53px;font-size:26px;color:#676a6c;letter-spacing:0.25px;">2023-09-20</div>
<div class="t c" style="left:772px;top:1465.53px;font-size:26px;color:#676a6c;">茶盘</div>
<div class="t c" style="left:1141px;top:1465.53px;font-size:26px;color:#676a6c;letter-spacing:0.25px;">41</div>
<div class="t c" style="left:1326px;top:1465.53px;font-size:26px;color:#676a6c;letter-spacing:0.25px;">413949</div>
<div class="t c" style="left:1547px;top:1465.53px;font-size:26px;color:#676a6c;letter-spacing:0.25px;">16945</div>
<div class="t c" style="left:1733px;top:1465.53px;font-size:26px;color:#676a6c;letter-spacing:0.25px;">1.80</div>
<div class="t c" style="left:1990px;top:1465.53px;font-size:26px;color:#676a6c;letter-spacing:0.25px;">13.31%</div>
<div class="t c" style="left:2212px;top:1465.53px;font-size:26px;color:#676a6c;letter-spacing:0.25px;">83.11%</div>
<div class="t c" style="left:2402px;top:1465.53px;font-size:26px;color:#676a6c;letter-spacing:0.25px;">84299</div>
<div class="t c" style="left:2588px;top:1465.53px;font-size:26px;color:#676a6c;letter-spacing:0.25px;">12665</div>
<div class="t c" style="left:2774px;top:1465.53px;font-size:26px;color:#676a6c;letter-spacing:0.25px;">59.97%</div>
<div class="a" style="left:396px;top:1528px;width:2576px;height:12px;background:#fbfbfb;border-top:2px solid #e7eaec"></div></body></html>
